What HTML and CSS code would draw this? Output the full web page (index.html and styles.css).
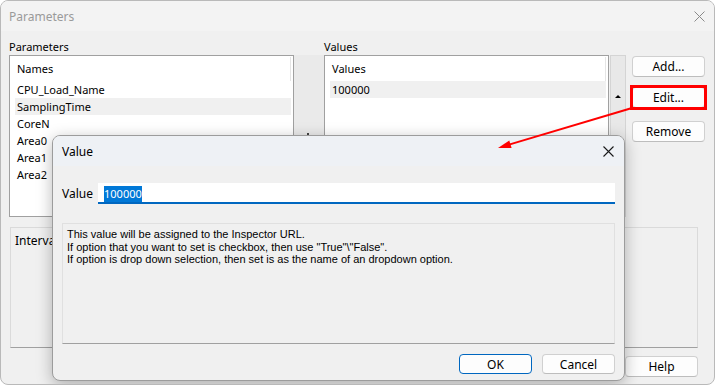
FILE: index.html
```html
<!DOCTYPE html>
<html lang="en">
<head>
    <meta charset="UTF-8">
    <title>Parameters</title>
    <link rel="stylesheet" href="styles.css">
</head>
<body>
    <div class="window">
        <div class="titlebar">
            <span class="window-title">Parameters</span>
            <svg class="close-icon" width="11" height="11" viewBox="0 0 11 11">
                <path d="M0.5 0.5 L10.5 10.5 M10.5 0.5 L0.5 10.5" stroke="#8a8a8a" stroke-width="1"/>
            </svg>
        </div>

        <div class="content">
            <div class="label">Parameters</div>
            <div class="label label-values">Values</div>

            <div class="listbox names-list">
                <div class="list-head">Names</div>
                <div class="list-row">CPU_Load_Name</div>
                <div class="list-row selected">SamplingTime</div>
                <div class="list-row">CoreN</div>
                <div class="list-row">Area0</div>
                <div class="list-row">Area1</div>
                <div class="list-row">Area2</div>
            </div>

            <div class="splitter"><span class="splitter-dot"></span></div>

            <div class="listbox values-list">
                <div class="list-head">Values</div>
                <div class="list-row selected">100000</div>
            </div>

            <div class="vscroll"><span class="up-arrow"></span></div>

            <div class="side-buttons">
                <button class="win-button">Add...</button>
                <button class="win-button marked">Edit...</button>
                <button class="win-button remove-button">Remove</button>
            </div>

            <div class="groupbox">Interval</div>

            <div class="footer">
                <button class="win-button">Help</button>
            </div>
        </div>

        <div class="modal">
            <div class="modal-titlebar">
                <span>Value</span>
                <svg class="close-icon" width="11" height="11" viewBox="0 0 11 11">
                    <path d="M0.5 0.5 L10.5 10.5 M10.5 0.5 L0.5 10.5" stroke="#1a1a1a" stroke-width="1.1"/>
                </svg>
            </div>
            <div class="modal-body">
                <div class="value-row">
                    <span>Value</span>
                    <div class="value-input"><span class="selection">100000</span></div>
                </div>
                <div class="info-box">
                    This value will be assigned to the Inspector URL.<br>
                    If option that you want to set is checkbox, then use "True"\"False".<br>
                    If option is drop down selection, then set is as the name of an dropdown option.
                </div>
                <div class="modal-buttons">
                    <button class="win-button default-button">OK</button>
                    <button class="win-button">Cancel</button>
                </div>
            </div>
        </div>

        <svg class="annotation" width="715" height="385" viewBox="0 0 715 385">
            <line x1="632" y1="108" x2="509" y2="144.6" stroke="#f00" stroke-width="2"/>
            <polygon points="498,148 511.6,148.1 509.3,140.4" fill="#f00"/>
        </svg>
    </div>
</body>
</html>
```

FILE: styles.css
```css
body {
    margin: 0;
    background-color: #ffffff;
    font-family: "Noto Sans", "Open Sans", sans-serif;
    font-size: 11px;
    color: #000000;
}

.window {
    position: relative;
    box-sizing: border-box;
    width: 715px;
    height: 385px;
    background-color: #f0f0f0;
    border: 1px solid #b9b9b9;
    border-radius: 8px;
    overflow: hidden;
}

.titlebar {
    display: flex;
    justify-content: space-between;
    align-items: center;
    height: 30px;
    padding: 0 9px 0 8px;
    background-color: #f3f3f3;
}
.window-title {
    color: #9a9a9a;
    font-size: 12px;
}


.content {
    display: grid;
    grid-template-columns: 285px 30px 285px 16px 73px;
    grid-template-rows: 16px 162px auto auto;
    padding: 8px 8px 0 8px;
}
.content .side-buttons {
    margin-left: 7px;
}
.label {
    grid-column: 1;
    line-height: 16px;
}
.label-values {
    grid-column: 3;
}

.listbox {
    box-sizing: border-box;
    background-color: #ffffff;
    border: 1px solid #a0a0a0;
    padding: 1px 2px 0 5px;
}
.names-list {
    grid-column: 1;
    grid-row: 2;
}
.values-list {
    grid-column: 3;
    grid-row: 2;
}
.list-head {
    height: 24px;
    line-height: 24px;
    padding-left: 2px;
    border-right: 1px solid #e5e5e5;
}
.list-row {
    height: 17px;
    line-height: 17px;
    padding-left: 2px;
}
.list-row.selected {
    background-color: #f0f0f0;
}

.splitter {
    position: relative;
    grid-column: 2;
    grid-row: 2;
    background-color: #eaeaea;
}
.splitter-dot {
    position: absolute;
    left: 13px;
    top: 78px;
    width: 2px;
    height: 2px;
    background-color: #444444;
}

.vscroll {
    position: relative;
    grid-column: 4;
    grid-row: 2;
    box-sizing: border-box;
    width: 16px;
    margin-left: 1px;
    background-color: #e8e8e8;
    border: 1px solid #d4d4d4;
}
.up-arrow {
    position: absolute;
    left: 4px;
    top: 39px;
    width: 0;
    height: 0;
    border-left: 3px solid transparent;
    border-right: 3px solid transparent;
    border-bottom: 3px solid #000000;
}

.side-buttons {
    grid-column: 5;
    grid-row: 2;
    display: flex;
    flex-direction: column;
    padding-top: 1px;
}
.side-buttons .win-button {
    margin-bottom: 10px;
}
.side-buttons .remove-button {
    margin-top: 3px;
}

.win-button {
    box-sizing: border-box;
    width: 73px;
    height: 21px;
    padding: 0;
    background-color: #fdfdfd;
    border: 1px solid #d0d0d0;
    border-bottom-color: #bdbdbd;
    border-radius: 4px;
    font-family: inherit;
    font-size: 12px;
    color: #000000;
}
.win-button.marked {
    position: relative;
}
.win-button.marked::after {
    content: "";
    position: absolute;
    left: -3px;
    top: -3px;
    right: -3px;
    bottom: -3px;
    border: 3px solid #ff0000;
}

.groupbox {
    grid-column: 1 / 6;
    grid-row: 3;
    box-sizing: border-box;
    height: 121px;
    margin: 10px 0 0 1px;
    padding: 4px 4px;
    border: 1px solid #dadada;
    border-bottom-color: #a0a0a0;
    font-size: 12px;
}

.footer {
    grid-column: 5;
    grid-row: 4;
    padding-top: 8px;
}


.modal {
    position: absolute;
    left: 51px;
    top: 134px;
    box-sizing: border-box;
    width: 573px;
    height: 246px;
    background-color: #f0f0f0;
    border: 1px solid #9c9c9c;
    border-radius: 8px;
    overflow: hidden;
    box-shadow: 0 4px 16px rgba(0, 0, 0, 0.28);
}
.modal-titlebar {
    display: flex;
    justify-content: space-between;
    align-items: center;
    height: 30px;
    padding: 0 10px 0 9px;
    background-color: #eef1f5;
    font-size: 12px;
}
.modal-body {
    padding: 17px 9px 0 9px;
}
.value-row {
    display: grid;
    grid-template-columns: 36px 1fr;
    align-items: center;
    font-size: 12px;
}
.value-input {
    box-sizing: border-box;
    height: 21px;
    padding: 3px 0 0 6px;
    background-color: #ffffff;
    border-bottom: 2px solid #0067c0;
    font-size: 11px;
}
.selection {
    display: inline-block;
    height: 16px;
    line-height: 16px;
    background-color: #0078d7;
    color: #ffffff;
}

.info-box {
    box-sizing: border-box;
    height: 121px;
    margin-top: 19px;
    padding: 4px 4px;
    border: 1px solid #e0e0e0;
    border-bottom-color: #a0a0a0;
    font-family: "Liberation Sans", Arial, sans-serif;
    font-size: 11px;
    line-height: 12.5px;
}

.modal-buttons {
    display: flex;
    justify-content: flex-end;
    gap: 10px;
    padding-top: 10px;
}
.modal-buttons .win-button {
    height: 20px;
}
.default-button {
    border-color: #0067c0;
}


.annotation {
    position: absolute;
    left: -1px;
    top: -1px;
    pointer-events: none;
}
```
